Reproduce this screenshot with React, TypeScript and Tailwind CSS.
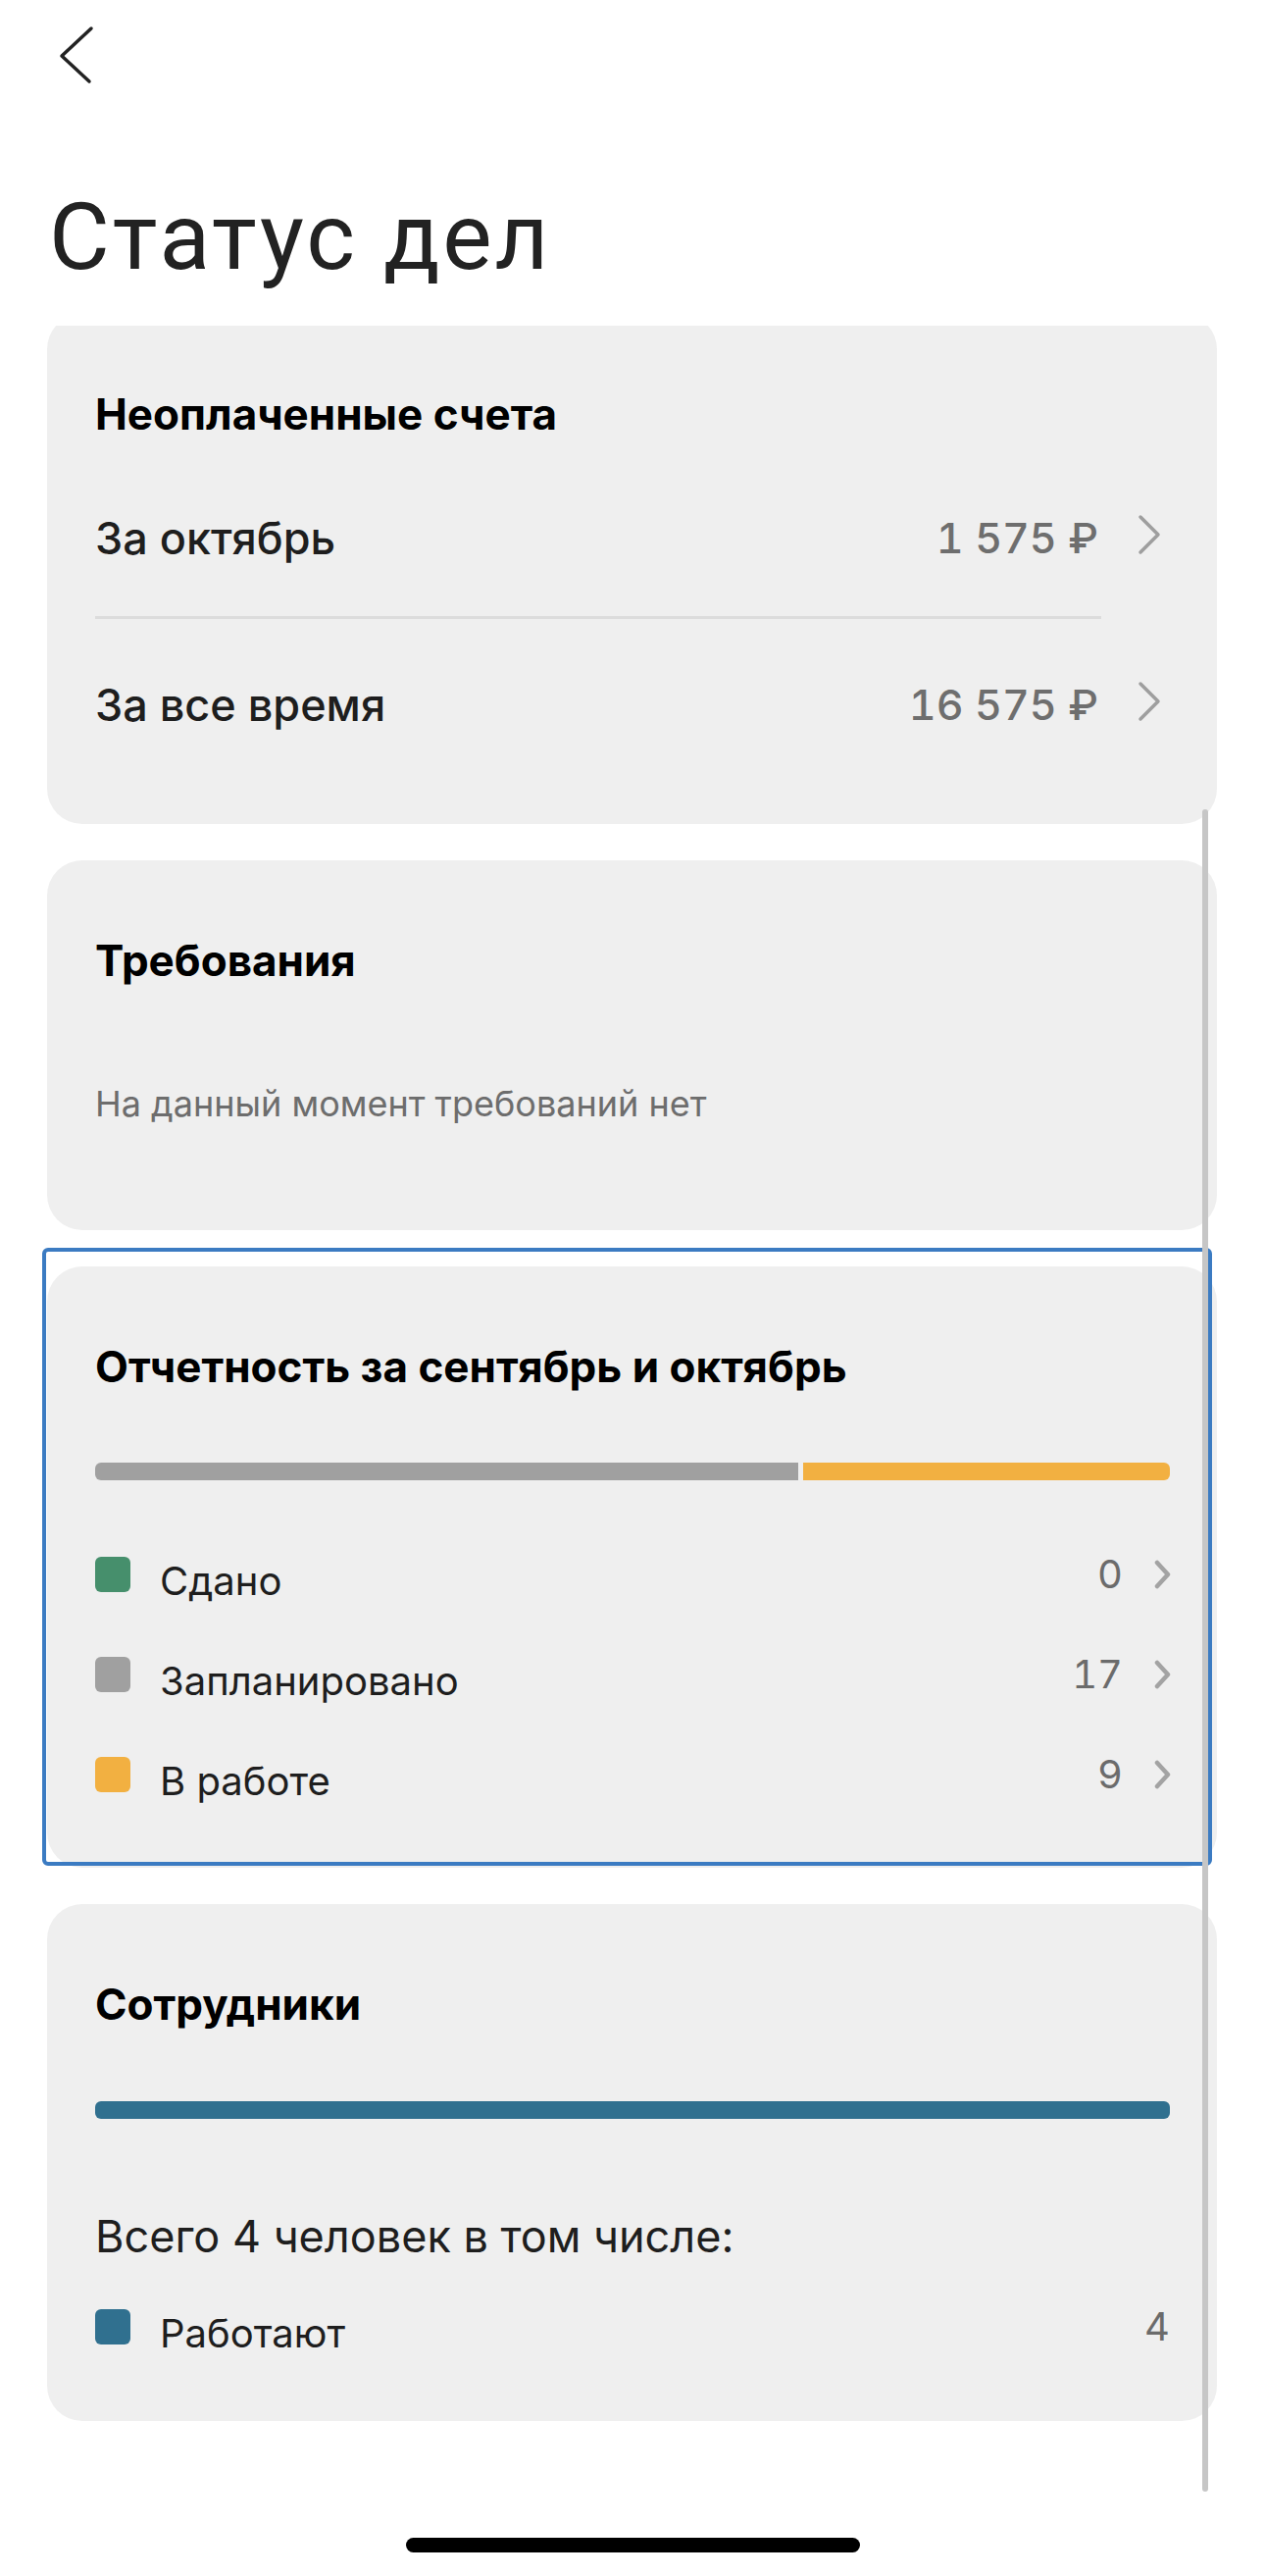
import React from "react";

interface LegendItem {
    label: string;
    color: string;
    value: number;
    arrow?: boolean;
}

const reports: LegendItem[] = [
    { label: "Сдано", color: "bg-[#468f6c]", value: 0, arrow: true },
    { label: "Запланировано", color: "bg-[#a0a0a0]", value: 17, arrow: true },
    { label: "В работе", color: "bg-[#f2b041]", value: 9, arrow: true },
];

function BigChevron() {
    return (
        <svg width="24" height="42" viewBox="0 0 24 42" fill="none">
            <path d="M3 3 L21 21 L3 39" stroke="#9e9e9e" strokeWidth="3.5" strokeLinecap="round" strokeLinejoin="round" />
        </svg>
    );
}

function SmallChevron() {
    return (
        <svg width="18" height="30" viewBox="0 0 18 30" fill="none">
            <path d="M3 3 L14 15 L3 27" stroke="#a3a3a3" strokeWidth="4.5" strokeLinecap="round" strokeLinejoin="round" />
        </svg>
    );
}

function Card({ children, className = "" }: { children: React.ReactNode; className?: string }) {
    return (
        <section className={"relative bg-[#efefef] rounded-[36px] pl-[49px] pr-[48px] " + className}>
            {children}
        </section>
    );
}

function CardTitle({ children }: { children: React.ReactNode }) {
    return <h2 className="text-[44px] leading-none font-bold text-black">{children}</h2>;
}

function Legend({ item }: { item: LegendItem }) {
    return (
        <div className="flex items-center h-[36px]">
            <span className={"w-[36px] h-[36px] rounded-[6px] shrink-0 " + item.color} />
            <span className="ml-[30px] mt-[14px] text-[40px] leading-none text-[#1e1e1e]">{item.label}</span>
            <span className="ml-auto text-[40px] leading-none tabular-nums text-[#6b6b6b]">{item.value}</span>
            {item.arrow && (
                <span className="ml-[32px] mr-[-2px]">
                    <SmallChevron />
                </span>
            )}
        </div>
    );
}

export default function App() {
    return (
        <div className="relative w-[1290px] h-[2626px] bg-white overflow-hidden font-[Inter,sans-serif]">
            <header className="h-[332px] pt-[26px]">
                <div className="pl-[59px]">
                    <svg width="38" height="60" viewBox="0 0 38 60" fill="none">
                        <path d="M34 3 L4 31 L32 57" stroke="#222" strokeWidth="3.5" strokeLinecap="round" strokeLinejoin="round" />
                    </svg>
                </div>
                <h1 className="mt-[108px] pl-[50px] font-[Roboto,sans-serif] text-[95px] leading-none tracking-[2.8px] text-[#222]">
                    Статус дел
                </h1>
            </header>

            <main className="overflow-hidden flex flex-col gap-[37px] px-[48px] pr-[49px]">
                <Card className="-mt-[12px] pt-[80px] pb-[72px]">
                    <CardTitle>Неоплаченные счета</CardTitle>
                    <div className="mt-[54px] h-[100px] flex items-center pr-[9px]">
                        <span className="text-[45px] leading-none font-medium text-[#1e1e1e]">За октябрь</span>
                        <span className="ml-auto text-[43px] leading-none font-medium tabular-nums text-[#6e6e6e]">1 575 ₽</span>
                        <span className="ml-[40px] -mt-[6px]">
                            <BigChevron />
                        </span>
                    </div>
                    <div className="mt-[30px] h-[3px] w-[1026px] bg-[#dcdcdc]" />
                    <div className="mt-[37px] h-[100px] flex items-center pr-[9px]">
                        <span className="text-[45px] leading-none font-medium text-[#1e1e1e]">За все время</span>
                        <span className="ml-auto text-[43px] leading-none font-medium tabular-nums text-[#6e6e6e]">16 575 ₽</span>
                        <span className="ml-[40px] -mt-[6px]">
                            <BigChevron />
                        </span>
                    </div>
                </Card>

                <Card className="pt-[80px] pb-[111px]">
                    <CardTitle>Требования</CardTitle>
                    <p className="mt-[106px] text-[36px] leading-none text-[#6d6d6d]">
                        На данный момент требований нет
                    </p>
                </Card>

                <Card className="pt-[80px] pb-[77px]">
                    <div className="absolute -top-[19px] -left-[5px] right-[5px] bottom-[2px] border-[4px] border-[#3b7bc2] rounded-[6px] pointer-events-none" />
                    <CardTitle>Отчетность за сентябрь и октябрь</CardTitle>
                    <div className="mt-[76px] h-[18px] flex gap-[5px]">
                        <div className="h-full w-[717px] bg-[#a0a0a0] rounded-l-[6px]" />
                        <div className="h-full flex-1 bg-[#f2b041] rounded-r-[6px]" />
                    </div>
                    <div className="mt-[78px] flex flex-col gap-[66px]">
                        {reports.map((r) => (
                            <Legend key={r.label} item={r} />
                        ))}
                    </div>
                </Card>

                <Card className="pt-[80px] pb-[78px]">
                    <CardTitle>Сотрудники</CardTitle>
                    <div className="mt-[77px] h-[18px] bg-[#30708f] rounded-[6px]" />
                    <p className="mt-[97px] text-[45px] leading-none text-[#1e1e1e]">Всего 4 человек в том числе:</p>
                    <div className="mt-[52px]">
                        <Legend item={{ label: "Работают", color: "bg-[#30708f]", value: 4 }} />
                    </div>
                </Card>
            </main>

            <div className="absolute left-[1226px] top-[825px] w-[6px] h-[1715px] rounded-full bg-[#c6c6c6]" />

            <div className="absolute left-[414px] top-[2587px] w-[463px] h-[15px] rounded-full bg-black" />
        </div>
    );
}
